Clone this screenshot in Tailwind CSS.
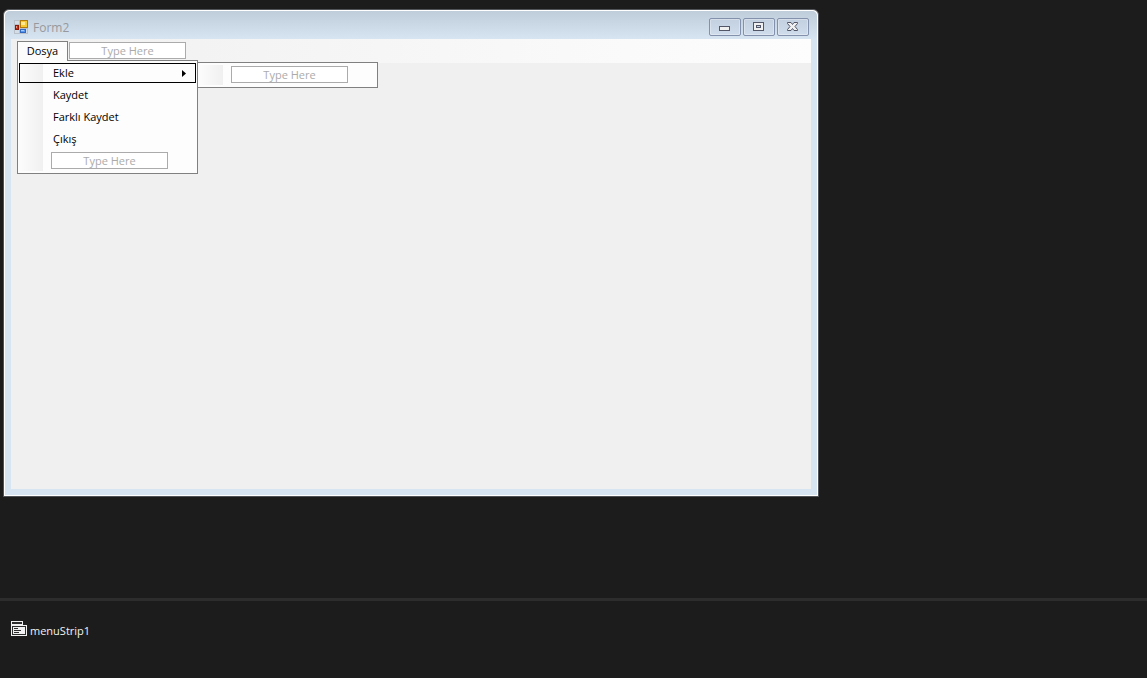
<!DOCTYPE html>
<html lang="tr">

<head>
  <meta charset="UTF-8">
  <meta name="viewport" content="width=device-width, initial-scale=1.0">
  <title>Form2 [Design]</title>
  <script src="https://cdn.jsdelivr.net/npm/@tailwindcss/browser@4"></script>
</head>

<body class="flex flex-col min-h-screen bg-[#1c1c1c] font-['Open_Sans','Noto_Sans',sans-serif] text-[11px] text-black">

  <!-- Design surface -->
  <main class="grow pt-[9px] pl-[3px] pr-2">

    <!-- Form window -->
    <section class="w-full max-w-[816px] rounded-t-md border border-[#505357] bg-white p-px">
      <div class="rounded-t-[5px] bg-[#d7e4f2] px-1.5 pb-1.5">

        <!-- Title bar -->
        <header class="-mx-1.5 flex h-7 items-center rounded-t-[5px] bg-linear-to-b from-[#bfcddb] to-[#d7e4f2] px-2">
          <svg class="mt-1 size-4" viewBox="0 0 16 16" shape-rendering="crispEdges" aria-hidden="true">
            <path d="M1 1h14v14H1z" fill="#b9c0c9" />
            <path d="M2 2h4v3H2zM2 11h4v3H2zM13 10h1v4h-1z" fill="#d3dde8" />
            <path d="M7.500 1.500h7v7h-7z" fill="#f8c830" stroke="#b07a10" />
            <path d="M8 3h4v3H8z" fill="#ffe890" />
            <path d="M2.500 6.500h3v4h-3z" fill="#c83018" stroke="#8c1808" />
            <path d="M3 7h1v2H3z" fill="#f09080" />
            <path d="M7.500 10.500h5v3h-5z" fill="#5a98f0" stroke="#3068c0" />
            <path d="M8 11h3v1H8z" fill="#a8ccff" />
          </svg>
          <h1 class="ml-1 mt-1.5 grow text-xs text-[#97999c]">Form2</h1>
          <div class="mt-[3px] flex gap-0.5">
            <button aria-label="Minimize" class="flex h-[18px] w-8 items-center justify-center rounded-xs border border-[#8391ac] bg-linear-to-b from-[#c3d0e0] to-[#cfdcec] inset-ring inset-ring-white/30">
              <svg class="h-3 w-3" viewBox="0 0 12 12" shape-rendering="crispEdges">
                <path d="M.5 5.500h10v4H.5z" fill="#f0f0f0" stroke="#535666" />
              </svg>
            </button>
            <button aria-label="Maximize" class="flex h-[18px] w-8 items-center justify-center rounded-xs border border-[#8391ac] bg-linear-to-b from-[#c3d0e0] to-[#cfdcec] inset-ring inset-ring-white/30">
              <svg class="h-3 w-3" viewBox="0 0 12 12" shape-rendering="crispEdges">
                <path d="M.5 1.500h10v8H.5z" fill="#f0f0f0" stroke="#535666" />
                <path d="M3.500 4.500h4v2h-4z" fill="#c8d5e5" stroke="#535666" />
              </svg>
            </button>
            <button aria-label="Close" class="flex h-[18px] w-8 items-center justify-center rounded-xs border border-[#8391ac] bg-linear-to-b from-[#c3d0e0] to-[#cfdcec] inset-ring inset-ring-white/30">
              <svg class="h-3 w-3" viewBox="0 0 12 12">
                <path d="M.5 1.500h3.500l1.500 2 1.500-2h3.500v1L8 5.500l2.500 3v1H7l-1.500-2-1.500 2H.5v-1l2.500-3-2.500-3z" fill="#f0f0f0" stroke="#535666" />
              </svg>
            </button>
          </div>
        </header>

        <!-- Client area -->
        <div class="min-h-[450px] bg-[#f0f0f0]">

          <!-- Menu strip -->
          <nav class="flex h-6 gap-px bg-linear-to-r from-[#f0f0f0] to-[#fdfdfd] pl-1.5 pt-0.5">
            <div class="relative">
              <button class="relative z-10 flex h-5 w-[51px] items-center justify-center border border-b-0 border-[#808080] bg-[#fcfcfc]">Dosya</button>

              <!-- Dosya menu -->
              <div class="absolute left-0 top-[19px] w-[181px] border border-[#808080] bg-[#fdfdfd] p-px">
                <div class="absolute inset-y-0.5 left-px w-6 bg-linear-to-r from-[#fcfcfc] to-[#f0f0f0]"></div>
                <ul class="relative">
                  <li class="relative py-px">
                    <button class="flex h-5 w-[177px] items-center justify-between border border-black pl-[33px] pr-2">
                      Ekle
                      <svg class="h-[7px] w-1.5" viewBox="0 0 6 7"><path d="M1 0v7l4-3.500z" /></svg>
                    </button>

                    <!-- Ekle submenu -->
                    <div class="absolute left-[178px] top-0 w-[181px] border border-[#808080] bg-[#fdfdfd] pb-1 pl-[33px] pt-[3px]">
                      <div class="absolute inset-y-0.5 left-px w-6 bg-linear-to-r from-[#fcfcfc] to-[#f0f0f0]"></div>
                      <input type="text" placeholder="Type Here" aria-label="New Ekle item"
                        class="relative block h-[17px] w-[117px] border border-[#ababab] bg-white text-center placeholder:text-[#ababab]">
                    </div>
                  </li>
                  <li><button class="flex h-[22px] w-full items-center pl-[34px]">Kaydet</button></li>
                  <li><button class="flex h-[22px] w-full items-center pl-[34px]">Farklı Kaydet</button></li>
                  <li><button class="flex h-[22px] w-full items-center pl-[34px]">Çıkış</button></li>
                  <li class="pb-[3px] pl-8 pt-0.5">
                    <input type="text" placeholder="Type Here" aria-label="New Dosya item"
                      class="block h-[17px] w-[117px] border border-[#ababab] bg-white text-center placeholder:text-[#ababab]">
                  </li>
                </ul>
              </div>
            </div>
            <input type="text" placeholder="Type Here" aria-label="New menu"
              class="mt-px block h-[17px] w-[117px] border border-[#ababab] bg-white text-center placeholder:text-[#ababab]">
          </nav>
        </div>
      </div>
    </section>
  </main>

  <!-- Component tray -->
  <footer class="h-20 border-t-3 border-[#2d2d2d] pl-[11px] pt-5 text-[#f1f1f1]">
    <button class="flex items-start gap-[3px]">
      <svg class="size-4" viewBox="0 0 16 16" shape-rendering="crispEdges" aria-hidden="true">
        <path d="M0 0h12v4h4v11H0z" fill="#f1f1f1" />
        <path d="M1 1h10v2H1zM1 5h14v9H1z" fill="#2d2d2d" />
        <path d="M2 6h12v7H2z" fill="#f1f1f1" />
        <path d="M3 7h4v1H3zM3 9h7v1H3zM3 11h5v1H3z" fill="#2d2d2d" />
      </svg>
      <span class="pt-0.5">menuStrip1</span>
    </button>
  </footer>
</body>

</html>
